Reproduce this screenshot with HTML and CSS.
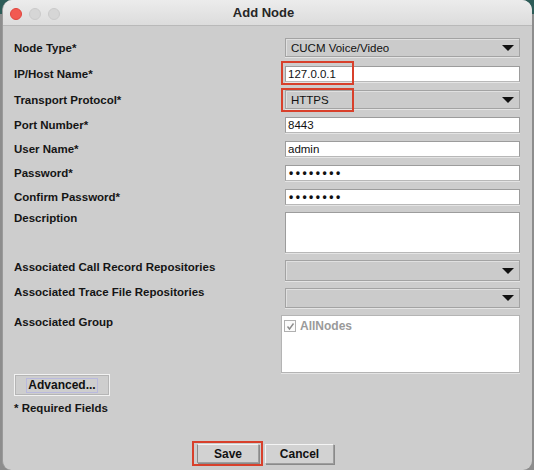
FILE: index.html
```html
<!DOCTYPE html>
<html>
<head>
<meta charset="utf-8">
<link rel="stylesheet" href="styles.css">
</head>
<body>
<div class="window">
  <div class="titlebar">
    <div class="lights">
      <span class="light red"></span>
      <span class="light"></span>
      <span class="light"></span>
    </div>
    <div class="title">Add Node</div>
  </div>
  <div class="content">
    <div class="form">
      <div class="row h19">
        <div class="label">Node Type*</div>
        <div class="field combo"><span>CUCM Voice/Video</span><span class="arrow"></span></div>
      </div>
      <div class="row h16 g9">
        <div class="label">IP/Host Name*</div>
        <div class="field text mark-wrap">127.0.0.1<span class="mark mark-ip"></span></div>
      </div>
      <div class="row h19">
        <div class="label">Transport Protocol*</div>
        <div class="field combo mark-wrap"><span>HTTPS</span><span class="arrow"></span><span class="mark mark-proto"></span></div>
      </div>
      <div class="row h16">
        <div class="label">Port Number*</div>
        <div class="field text">8443</div>
      </div>
      <div class="row h16">
        <div class="label">User Name*</div>
        <div class="field text">admin</div>
      </div>
      <div class="row h16">
        <div class="label">Password*</div>
        <div class="field text dots">••••••••</div>
      </div>
      <div class="row h16">
        <div class="label">Confirm Password*</div>
        <div class="field text dots">••••••••</div>
      </div>
      <div class="row h41 g7 top">
        <div class="label lift1">Description</div>
        <div class="field text"></div>
      </div>
      <div class="row h21 g7 top">
        <div class="label">Associated Call Record Repositories</div>
        <div class="field combo"><span></span><span class="arrow"></span></div>
      </div>
      <div class="row h20 g7 top">
        <div class="label lift3">Associated Trace File Repositories</div>
        <div class="field combo"><span></span><span class="arrow"></span></div>
      </div>
      <div class="row h58 g7 top">
        <div class="label">Associated Group</div>
        <div class="field list">
          <div class="item">
            <span class="check"><svg width="9" height="9" viewBox="0 0 9 9"><path d="M1.5 4.5 L3.5 7 L7.5 1.5" fill="none" stroke="#8c8c8c" stroke-width="1.4"/></svg></span>
            <span>AllNodes</span>
          </div>
        </div>
      </div>
    </div>
    <div class="adv-row">
      <button class="btn advanced"><span class="focus">Advanced...</span></button>
    </div>
    <div class="required">* Required Fields</div>
    <div class="actions">
      <span class="save-wrap"><button class="btn save">Save</button></span>
      <button class="btn cancel">Cancel</button>
    </div>
  </div>
</div>
</body>
</html>
```

FILE: styles.css
```css
* { box-sizing: border-box; }
html, body {
  margin: 0;
  padding: 0;
  width: 534px;
  height: 470px;
  overflow: hidden;
}
body {
  background: linear-gradient(#2d5c58 0, #2d5c58 14px, #8d8d8d 14px);
  font-family: "Liberation Sans", Arial, sans-serif;
  color: #161616;
}
.window {
  margin-left: 2px;
  width: 530px;
  height: 470px;
  background: #cdcdcd;
  border-radius: 10px 10px 9px 9px;
  overflow: hidden;
  border-left: 1px solid #9a9a9a;
}
.titlebar {
  height: 26px;
  background: linear-gradient(#ececec, #dcdcdc);
  border-bottom: 1px solid #b9b9b9;
  position: relative;
  display: flex;
  align-items: center;
  justify-content: center;
}
.lights {
  position: absolute;
  left: 7px;
  top: 8px;
  display: flex;
  gap: 7px;
}
.light {
  width: 12px;
  height: 12px;
  border-radius: 50%;
  background: #d6d6d6;
  border: 1px solid #cacaca;
}
.light.red {
  background: #f25a52;
  border-color: #e0443c;
}
.title {
  font-weight: bold;
  font-size: 13px;
  color: #262626;
  margin-left: -8px;
}
.content {
  padding: 12px 0 0 11px;
}
.form {
  display: flex;
  flex-direction: column;
}
.row {
  display: grid;
  grid-template-columns: 271px 235px;
  align-items: center;
  margin-top: 8px;
}
.row:first-child { margin-top: 0; }
.row.g9 { margin-top: 9px; }
.row.g7 { margin-top: 7px; }
.row.top { align-items: start; }
.h16 { height: 16px; }
.h19 { height: 19px; }
.h20 { height: 20px; }
.h21 { height: 21px; }
.h41 { height: 41px; }
.h58 { height: 58px; }
.row > .field { height: 100%; }
.label {
  font-size: 11.5px;
  font-weight: bold;
  line-height: 14px;
  color: #151515;
  white-space: nowrap;
}
.lift1 { margin-top: -1px; }
.lift3 { margin-top: -3px; }
.field {
  font-size: 11.5px;
  color: #111;
  position: relative;
}
.combo {
  background: #cbcbcb;
  border: 1px solid #a3a3a3;
  box-shadow: inset 1px 1px 0 #e0e0e0, 0 1px 0 #e4e4e4;
  display: flex;
  align-items: center;
  justify-content: space-between;
  padding: 0 5px 0 5px;
}
.arrow {
  width: 0;
  height: 0;
  border-left: 6px solid transparent;
  border-right: 6px solid transparent;
  border-top: 6px solid #111;
}
.text {
  background: #fff;
  border: 1px solid #9c9c9c;
  border-bottom-color: #b8b8b8;
  box-shadow: 0 1px 0 #e4e4e4;
  padding: 0 2px;
  line-height: 14px;
}
.dots {
  letter-spacing: 2.5px;
  font-weight: bold;
  font-size: 12px;
  padding-left: 3px;
}
.list {
  margin-left: -4px;
  width: 239px;
  background: #fff;
  border: 1px solid #b4b4b4;
  box-shadow: 0 1px 0 #e4e4e4;
}
.item {
  display: flex;
  align-items: center;
  gap: 4px;
  padding: 3px 0 0 2px;
  font-size: 12px;
  font-weight: bold;
  color: #9a9a9a;
}
.check {
  width: 12px;
  height: 12px;
  border: 1px solid #b0b0b0;
  display: flex;
  align-items: center;
  justify-content: center;
  background: #fbfbfb;
}
.mark {
  position: absolute;
  border: 2px solid #d8402b;
  pointer-events: none;
}
.mark-ip {
  left: -5px;
  top: -6px;
  width: 73px;
  height: 24px;
}
.mark-proto {
  left: -5px;
  top: -3px;
  width: 73px;
  height: 24px;
}
.adv-row {
  margin-top: 1px;
  height: 22px;
}
.btn {
  font-family: "Liberation Sans", Arial, sans-serif;
  font-size: 12px;
  font-weight: bold;
  color: #111;
  background: #d2d2d2;
  border: 1px solid #9e9e9e;
  border-top-color: #f4f4f4;
  border-left-color: #f4f4f4;
  box-shadow: 1px 1px 0 #8a8a8a;
  padding: 0;
  margin: 0;
}
.advanced {
  width: 96px;
  height: 22px;
  border: 1px solid #f2f2f2;
  box-shadow: inset 0 0 0 1px #b5b5b5;
  background: #cecece;
}
.focus {
  display: inline-block;
  border: 1px solid #b9b9de;
  padding: 0 1px;
  line-height: 13px;
}
.required {
  margin-top: 5px;
  font-size: 11.5px;
  font-weight: bold;
  line-height: 14px;
}
.actions {
  margin-top: 26px;
  display: flex;
  align-items: center;
  padding-left: 178px;
  gap: 2px;
}
.save-wrap {
  display: inline-flex;
  border: 2px solid #d8402b;
  padding: 1px 2px 1px 3px;
}
.save {
  width: 62px;
  height: 19px;
  border-left-color: #8a8a8a;
}
.cancel {
  width: 69px;
  height: 20px;
}
```
